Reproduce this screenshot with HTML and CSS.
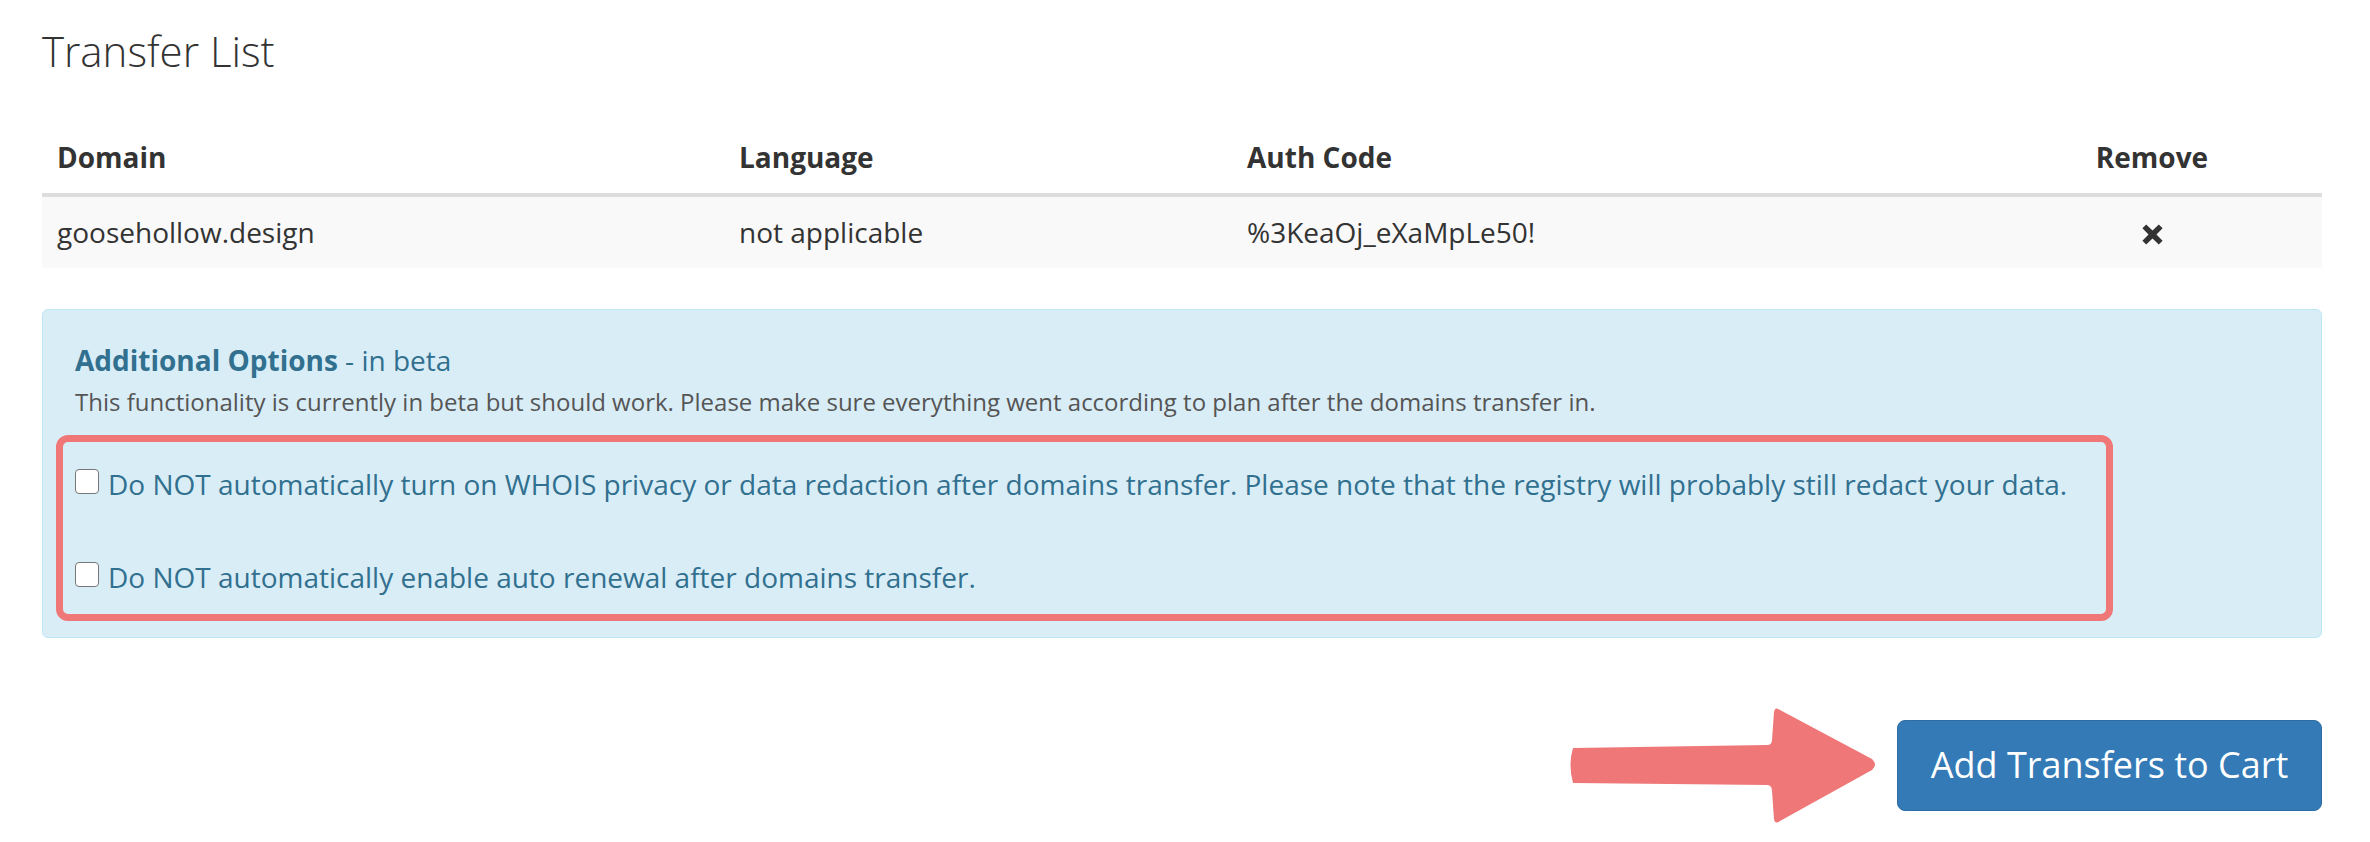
FILE: index.html
```html
<!DOCTYPE html>
<html lang="en">
<head>
<meta charset="utf-8">
<title>Transfer List</title>
<link rel="stylesheet" href="styles.css">
</head>
<body>
<div class="page">
  <h3 class="title">Transfer List</h3>

  <div class="table">
    <div class="row head">
      <div class="cell">Domain</div>
      <div class="cell">Language</div>
      <div class="cell">Auth Code</div>
      <div class="cell center">Remove</div>
    </div>
    <div class="row body">
      <div class="cell">goosehollow.design</div>
      <div class="cell">not applicable</div>
      <div class="cell">%3KeaOj_eXaMpLe50!</div>
      <div class="cell center">
        <svg class="x-icon" viewBox="0 0 20 20" width="23" height="21" aria-label="Remove">
          <path d="M4 0.4 L10 6.2 L16 0.4 L19.6 4 L13.8 10 L19.6 16 L16 19.6 L10 13.8 L4 19.6 L0.4 16 L6.2 10 L0.4 4 Z" fill="#333"/>
        </svg>
      </div>
    </div>
  </div>

  <div class="alert">
    <div class="alert-title"><strong>Additional Options</strong> - in beta</div>
    <div class="alert-desc">This functionality is currently in beta but should work. Please make sure everything went according to plan after the domains transfer in.</div>
    <div class="highlight">
      <label class="opt"><input type="checkbox" class="cb"><span>Do NOT automatically turn on WHOIS privacy or data redaction after domains transfer. Please note that the registry will probably still redact your data.</span></label>
      <label class="opt"><input type="checkbox" class="cb"><span>Do NOT automatically enable auto renewal after domains transfer.</span></label>
    </div>
  </div>

  <div class="actions">
    <svg class="arrow" viewBox="0 0 310 117" width="310" height="117" aria-hidden="true">
      <path d="M5 41 Q0 58 5 76 L200 78 Q204 79 204 84 L206 112 Q207 118 212 114 L304 63 Q310 58 304 52 L212 3 Q207 -1 206 5 L204 33 Q204 38 199 38 Z" fill="#ef7777"/>
    </svg>
    <button class="btn">Add Transfers to Cart</button>
  </div>
</div>
</body>
</html>
```
FILE: styles.css
```css
* { box-sizing: border-box; }
html, body { margin: 0; padding: 0; background: #fff; }
body {
  font-family: "Open Sans", "Liberation Sans", sans-serif;
  color: #333;
}
.page {
  padding: 0 48px 0 42px;
}
.title {
  margin: 26px 0 0 0;
  font-size: 42px;
  line-height: 50px;
  font-weight: 300;
  color: #333;
}
.table {
  margin-top: 46px;
}
.row {
  display: grid;
  grid-template-columns: 682px 508px 750px 1fr;
}
.cell {
  padding: 0 15px;
  font-size: 28px;
  line-height: 39px;
}
.center { text-align: center; }
.head .cell {
  font-weight: 700;
  padding-top: 16px;
  padding-bottom: 16px;
}
.head { border-bottom: 4px solid #ddd; }
.body { background: #f9f9f9; }
.body .cell {
  padding-top: 16px;
  padding-bottom: 16px;
}
.x-icon { display: inline-block; vertical-align: -2px; }

.alert {
  margin-top: 41px;
  background: #d9edf7;
  border: 1px solid #bce8f1;
  border-radius: 6px;
  color: #31708f;
  padding: 31px 32px 16px 32px;
}
.alert-title {
  font-size: 28px;
  line-height: 39px;
}
.alert-title strong { font-weight: 700; }
.alert-desc {
  margin-top: 7px;
  font-size: 24px;
  line-height: 30px;
  color: #555;
}
.highlight {
  margin: 18px 0 0 -19px;
  width: 2057px;
  border: 7px solid #ef7777;
  border-radius: 12px;
  padding: 24px 12px 19px 12px;
  display: flex;
  flex-direction: column;
  gap: 57px;
}
.opt {
  display: flex;
  align-items: flex-start;
  font-size: 28px;
  line-height: 36px;
  color: #31708f;
}
.cb {
  appearance: none;
  -webkit-appearance: none;
  width: 24px;
  height: 25px;
  margin: 3px 9px 0 0;
  background: #fff;
  border: 1.5px solid #767676;
  border-radius: 4px;
  flex: none;
}
.actions {
  margin-top: 69px;
  display: flex;
  justify-content: flex-end;
  align-items: center;
  gap: 19px;
}
.arrow { display: block; flex: none; }
.btn {
  font-family: "Open Sans", "Liberation Sans", sans-serif;
  font-size: 36px;
  line-height: 50px;
  color: #fff;
  background: #337ab7;
  border: 1px solid #2e6da4;
  border-radius: 8px;
  padding: 19px 32px 20px 32px;
  width: 425px;
  white-space: nowrap;
}
```
